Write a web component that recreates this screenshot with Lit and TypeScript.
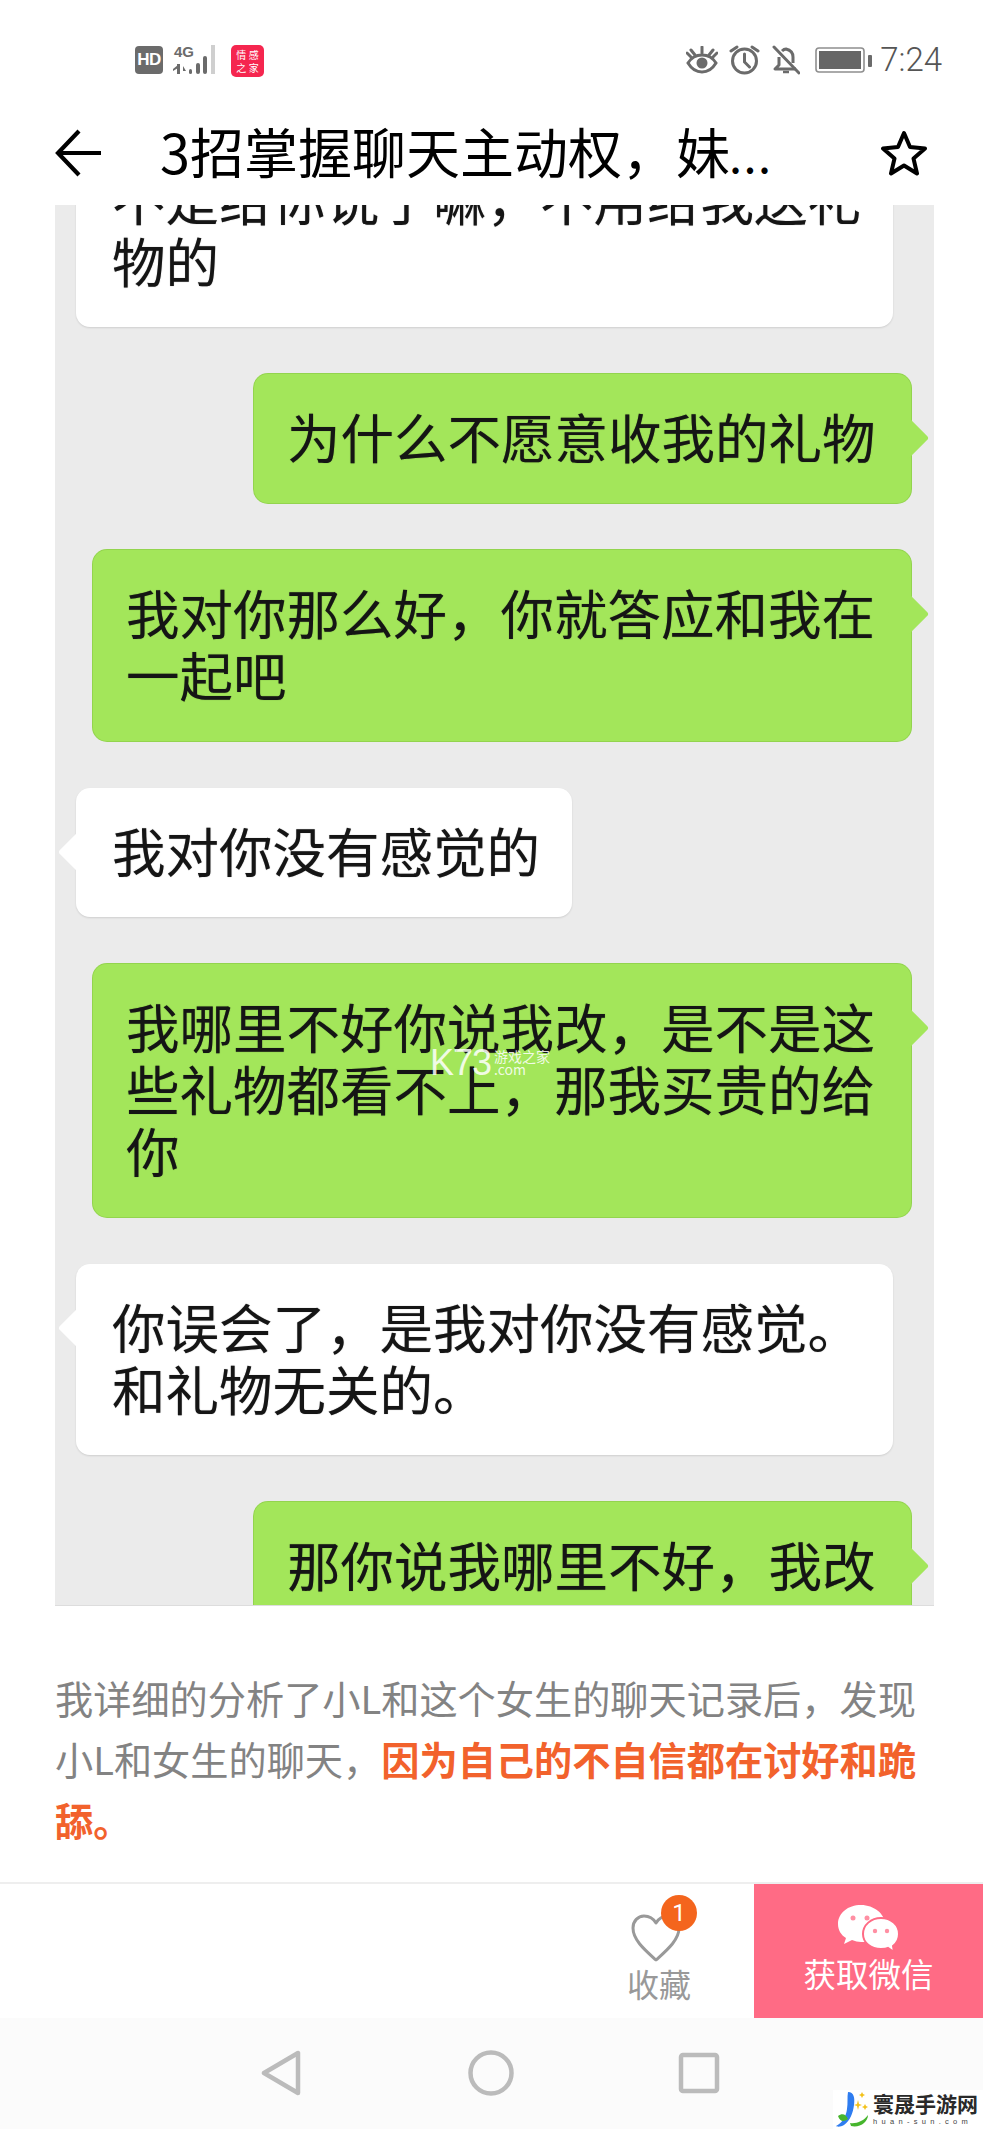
import { LitElement, html, css } from "lit";
import { customElement } from "lit/decorators.js";

@customElement("app-root")
export class AppRoot extends LitElement {
  static styles = css`
    :host { display: block; width: 983px; height: 2129px; background: #fff; overflow: hidden; font-family: "Noto Sans CJK SC", "Liberation Sans", sans-serif; }
    svg { display: block; flex: none; }
    .status { height: 100px; box-sizing: border-box; padding: 45px 41px 0 135px; display: flex; align-items: flex-start; }
    .hd { width: 28px; height: 28px; margin-top: 1px; border-radius: 4px; background: #6b6b6b; color: #fff; font: 700 17px/28px "Liberation Sans", sans-serif; text-align: center; letter-spacing: -0.5px; }
    .net { margin-left: 9px; position: relative; width: 52px; height: 32px; }
    .net b { position: absolute; left: 2px; top: -1px; font: 700 15px/16px "Liberation Sans", sans-serif; color: #6b6b6b; letter-spacing: 0; }
    .app { margin-left: 7px; width: 33px; height: 32px; border-radius: 5px; background: #f5264f; color: #fff; font-size: 10px; line-height: 13px; display: grid; grid-template-columns: 1fr 1fr; place-items: center; align-content: center; padding: 0 4px; box-sizing: border-box; }
    .spacer { flex: 1; }
    .right { display: flex; align-items: center; height: 30px; }
    .time { margin-left: 8px; font: 300 33px/30px Roboto, sans-serif; color: #555; letter-spacing: 0; }
    .header { height: 105px; display: flex; align-items: center; box-sizing: border-box; padding: 0 56px 0 55px; }
    .title { margin-left: 59px; margin-top: -4px; font-size: 54px; line-height: 1.1; color: #000; white-space: nowrap; flex: 1; font-weight: 400; }
    .title span { font-size: 34px; letter-spacing: 3.5px; font-weight: 700; }
    .chat { height: 1401px; margin: 0 49px 0 55px; background: #ebebeb; overflow: hidden; border-bottom: 1px solid #ddd; box-sizing: border-box; display: flex; flex-direction: column; gap: 47px; position: relative; }
    .bubble { position: relative; flex: none; box-sizing: border-box; font-size: 53.5px; line-height: 62px; color: #151515; padding: 31px 33px 36px; border-radius: 14px; text-shadow: 0 0 1px rgba(0,0,0,.45); }
    .white { background: #fff; margin-left: 21px; padding-left: 36px; align-self: flex-start; box-shadow: 0 1px 2px rgba(0,0,0,.12); }
    .green { background: #a3e65a; margin-right: 23px; align-self: flex-end; box-shadow: 0 0 0 1px #93d44e; }
    .w-full { width: 817px; }
    .g-full { width: 818px; }
    .g-short { width: 657px; }
    .w-short { width: 496px; }
    .first { margin-top: -69px; }
    .tail { position: absolute; top: 49px; width: 30px; height: 30px; transform: rotate(45deg); border-radius: 3px; background: inherit; z-index: 0; }
    .green .tail { right: -12px; }
    .white .tail { left: -12px; }
    .txt { position: relative; z-index: 1; white-space: nowrap; }
    .mark { position: absolute; left: 337px; top: 86px; z-index: 2; display: flex; color: rgba(255,255,255,.85); text-shadow: none; }
    .mark .k { font: 400 36px/26px "Liberation Sans", sans-serif; letter-spacing: -1px; }
    .mark .s { margin-left: 3px; font-size: 14px; line-height: 13px; display: flex; flex-direction: column; }
    .para { height: 276px; box-sizing: border-box; padding: 61px 40px 0 55px; font-size: 38.2px; line-height: 61px; color: #838383; white-space: nowrap; }
    .para strong { color: #f2622c; font-weight: 700; }
    .bar { height: 136px; border-top: 2px solid #eee; box-sizing: border-box; display: flex; justify-content: flex-end; background: #fff; }
    .fav { width: 164px; position: relative; box-sizing: border-box; padding-top: 30px; display: flex; flex-direction: column; align-items: center; color: #999; font-size: 32px; line-height: 40px; }
    .fav span.l { margin-top: 1px; margin-left: -26px; }
    .fav svg { margin-left: -32px; }
    .badge { position: absolute; left: 71px; top: 11px; width: 36px; height: 36px; border-radius: 50%; background: #f4651d; color: #fff; font: 400 24px/36px Roboto, sans-serif; text-align: center; }
    .get { width: 229px; background: #ff6b85; color: #fff; display: flex; flex-direction: column; align-items: center; padding-top: 21px; box-sizing: border-box; font-size: 32.5px; line-height: 44px; }
    .get span { margin-top: -2px; }
    .nav { height: 111px; background: #fbfbfb; position: relative; display: flex; justify-content: flex-start; padding: 32px 0 0 260px; box-sizing: border-box; }
    .wm { position: absolute; right: 0; bottom: 0; width: 150px; height: 39px; background: #fff; display: flex; padding-left: 3px; box-sizing: border-box; }
    .wm .t { margin-left: 3px; display: flex; flex-direction: column; align-items: flex-start; }
    .wm .n { font: 700 21px/27px "Noto Sans CJK SC", serif; color: #2a2a2a; white-space: nowrap; }
    .wm .d { font: 400 7.5px/10px "Liberation Sans", sans-serif; letter-spacing: 4.3px; color: #444; white-space: nowrap; }
  `;

  render() {
    return html`
      <div class="status">
        <div class="hd">HD</div>
        <div class="net">
          <b>4G</b>
          <svg width="52" height="32" viewBox="0 0 52 32">
            <g fill="#6b6b6b">
              <rect x="5" y="19" width="3" height="10"/><path d="M1 24l5-4v3l-5 3zM11 21l3 5h-3z"/>
              <rect x="17" y="24" width="3" height="5" rx="1.5"/><rect x="24" y="18" width="4" height="11" rx="2"/><rect x="31" y="11" width="4" height="18" rx="2"/>
            </g>
            <rect x="39" y="0" width="4" height="29" fill="#cfcfcf"/>
          </svg>
        </div>
        <div class="app"><span>情</span><span>感</span><span>之</span><span>家</span></div>
        <div class="spacer"></div>
        <div class="right">
          <svg width="32" height="28" viewBox="0 0 32 28" fill="none" stroke="#6b6b6b" stroke-width="3">
            <path d="M2 17c3-5 8-8 14-8s11 3 14 8c-3 5-8 9-14 9s-11-4-14-9z"/><circle cx="16" cy="17" r="5.5" fill="#6b6b6b" stroke="none"/>
            <path d="M16 1v6M5 4l4 5M27 4l-4 5M1 7l4 4M31 7l-4 4" stroke-linecap="round"/>
          </svg>
          <svg style="margin-left:11px" width="31" height="30" viewBox="0 0 31 30" fill="none" stroke="#6b6b6b" stroke-width="3">
            <circle cx="15.5" cy="16" r="12"/><path d="M15.5 9v8l5 5M2 6l6-4M29 6l-6-4" stroke-linecap="round"/>
          </svg>
          <svg style="margin-left:12px" width="28" height="30" viewBox="0 0 28 30" fill="none" stroke="#6b6b6b" stroke-width="3">
            <path d="M7 12v8l-4 4h21M21 18v-6c0-4-3-7-7-8-2 0-3 1-4 2" stroke-linejoin="round"/><path d="M2 2l25 26" stroke-linecap="round"/><path d="M11 27h6" stroke-width="2.5"/>
          </svg>
          <svg style="margin-left:15px" width="57" height="28" viewBox="0 0 57 28" fill="none">
            <rect x="1" y="2" width="48" height="24" rx="3" stroke="#8f8f8f" stroke-width="1.6"/><rect x="4" y="5" width="42" height="18" fill="#666"/><rect x="53" y="9" width="4" height="12" rx="1" fill="#6b6b6b"/>
          </svg>
          <span class="time">7:24</span>
        </div>
      </div>

      <div class="header">
        <svg width="46" height="48" viewBox="0 0 46 48" fill="none" stroke="#000" stroke-width="4.2"><path d="M24 2L3 24l21 22M3 24h43"/></svg>
        <div class="title">3招掌握聊天主动权，妹<span>...</span></div>
        <svg width="46" height="46" viewBox="0 0 46 46" fill="none" stroke="#000" stroke-width="4" stroke-linejoin="round"><path d="M23 3l6 14 15 1.500-11.500 10 3.500 15L23 35.500 10 43.500l3.500-15L2 18.500 17 17z"/></svg>
      </div>

      <div class="chat">
        <div class="bubble white w-full first"><div class="txt">不是给你说了嘛，不用给我送礼<br>物的</div></div>
        <div class="bubble green g-short"><i class="tail"></i><div class="txt">为什么不愿意收我的礼物</div></div>
        <div class="bubble green g-full"><i class="tail"></i><div class="txt">我对你那么好，你就答应和我在<br>一起吧</div></div>
        <div class="bubble white w-short"><i class="tail"></i><div class="txt">我对你没有感觉的</div></div>
        <div class="bubble green g-full"><i class="tail"></i><div class="txt">我哪里不好你说我改，是不是这<br>些礼物都看不上，那我买贵的给<br>你</div>
          <div class="mark"><span class="k">K73</span><span class="s"><span>游戏之家</span><span>.com</span></span></div>
        </div>
        <div class="bubble white w-full"><i class="tail"></i><div class="txt">你误会了，是我对你没有感觉。<br>和礼物无关的。</div></div>
        <div class="bubble green g-short"><i class="tail"></i><div class="txt">那你说我哪里不好，我改</div></div>
      </div>

      <div class="para">我详细的分析了小L和这个女生的聊天记录后，发现<br>小L和女生的聊天，<strong>因为自己的不自信都在讨好和跪<br>舔。</strong></div>

      <div class="bar">
        <div class="fav">
          <svg width="50" height="48" viewBox="0 0 50 48" fill="none" stroke="#999" stroke-width="3"><path d="M25 46C14 36 2 26 2 14 2 7 7 2 13 2c5 0 9 2 12 7 3-5 7-7 12-7 6 0 11 5 11 12 0 12-12 22-23 32z" stroke-linejoin="round"/></svg>
          <span class="l">收藏</span>
          <span class="badge">1</span>
        </div>
        <div class="get">
          <svg width="62" height="48" viewBox="0 0 62 48">
            <path fill="#fff" d="M23 0C10 0 0 8 0 19c0 6 3 11 8 14l-2 6 8-4c3 1 6 2 9 2 13 0 24-8 24-18S36 0 23 0z"/>
            <path fill="#fff" stroke="#ff6b85" stroke-width="2" d="M43 13c-10 0-18 7-18 16s8 15 18 15c3 0 5 0 7-1l6 4-1-6c4-3 6-7 6-12 0-9-8-16-18-16z"/>
            <g fill="#ff8fa3"><circle cx="15" cy="13" r="2.500"/><circle cx="29" cy="13" r="2.500"/><circle cx="37" cy="26" r="2.200"/><circle cx="49" cy="26" r="2.200"/></g>
          </svg>
          <span>获取微信</span>
        </div>
      </div>

      <div class="nav">
        <svg width="42" height="46" viewBox="0 0 42 46" fill="none" stroke="#bbb" stroke-width="4.500" stroke-linejoin="round"><path d="M38 3v40L4 23z"/></svg>
        <svg width="46" height="46" viewBox="0 0 46 46" fill="none" stroke="#bbb" stroke-width="4.500" style="margin-left:166px"><ellipse cx="23" cy="23" rx="20.500" ry="20.500"/></svg>
        <svg width="42" height="42" viewBox="0 0 42 42" fill="none" stroke="#bbb" stroke-width="4.500" style="margin-left:164px;margin-top:2px" stroke-linejoin="round"><rect x="3" y="3" width="36" height="36" rx="2"/></svg>
        <div class="wm">
          <svg width="34" height="39" viewBox="0 0 34 39">
            <path fill="#2f7df0" d="M12 2c6 0 7 6 6 13-1 8-4 16-10 20-3 2-7 2-8 1 6-3 10-9 11-17 1-6 0-12 1-17z"/>
            <path fill="#46b52d" d="M2 26c4-3 8-2 10 3-4 3-8 3-10-3zM14 33c6 1 14-2 18-8 0 7-8 13-17 11z"/>
            <path fill="#f3c21b" d="M22 10l1 4 3 1-3 1-1 4-1-4-3-1 3-1zM26 2l1 2 2 1-2 1-1 2-1-2-2-1 2-1zM29 14l1 2 2 1-2 1-1 2-1-2-2-1 2-1z"/>
          </svg>
          <div class="t"><span class="n">寰晟手游网</span><span class="d">huan-sun.com</span></div>
        </div>
      </div>
    `;
  }
}
